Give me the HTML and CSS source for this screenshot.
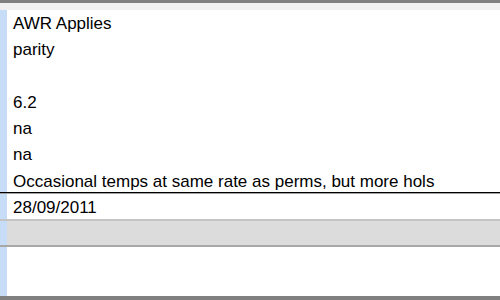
FILE: index.html
```html
<!DOCTYPE html>
<html>
<head>
<meta charset="utf-8">
<link rel="stylesheet" href="styles.css">
</head>
<body>
<div class="frame">
  <div class="topbar"></div>
  <div class="topstrip"></div>
  <div class="grid">
    <div class="row row-notes">
      <div class="handle"></div>
      <div class="cell notes">AWR Applies<br>parity<br><br>6.2<br>na<br>na<br>Occasional temps at same rate as perms, but more hols</div>
    </div>
    <div class="row row-date">
      <div class="handle"></div>
      <div class="cell date">28/09/2011</div>
    </div>
    <div class="row row-band">
      <div class="handle"></div>
      <div class="cell band"></div>
    </div>
    <div class="row row-empty">
      <div class="handle"></div>
      <div class="cell empty"></div>
    </div>
  </div>
  <div class="bottombar"></div>
</div>
</body>
</html>
```
FILE: styles.css
```css
html, body {
  margin: 0;
  padding: 0;
  background: #ffffff;
}
.frame {
  width: 500px;
  height: 300px;
  display: flex;
  flex-direction: column;
  font-family: "Liberation Sans", Arial, sans-serif;
  font-size: 17px;
  color: #000;
  overflow: hidden;
}
.topbar {
  height: 3px;
  background: #808080;
  flex: none;
}
.topstrip {
  height: 7px;
  background: #f0f0f0;
  flex: none;
}
.grid {
  flex: 1;
  display: flex;
  flex-direction: column;
}
.row {
  display: flex;
  flex: none;
}
.handle {
  width: 7px;
  flex: none;
  background: #c7dcf7;
}
.cell {
  flex: 1;
  padding-left: 6px;
  white-space: nowrap;
  overflow: hidden;
}
.row-notes {
  height: 182px;
  border-bottom: 1px solid #000;
}
.notes {
  padding-top: 1px;
  line-height: 26.3px;
}
.row-date {
  height: 25px;
  border-top: 1px solid #a0a0a0;
}
.date {
  padding-top: 2px;
  line-height: 23px;
}
.row-band {
  height: 24px;
  border-top: 2px solid #c4c4c4;
  border-bottom: 2px solid #a8a8a8;
}
.band {
  background: #dcdcdc;
}
.row-empty {
  flex: 1;
}
.bottombar {
  height: 4px;
  background: #808080;
  flex: none;
}
```
